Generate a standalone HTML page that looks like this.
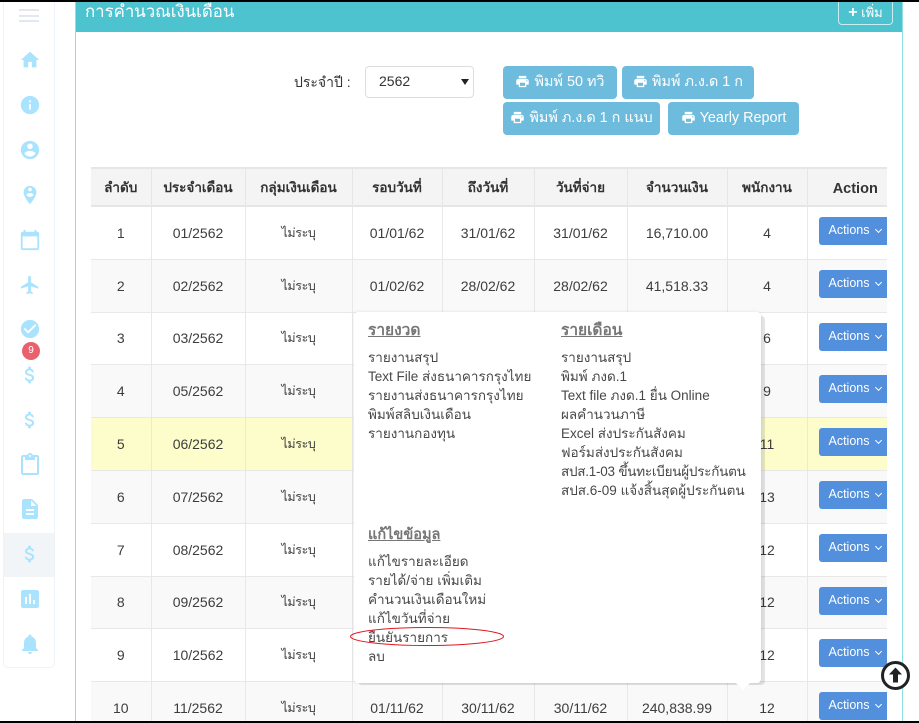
<!DOCTYPE html>
<html lang="th"><head><meta charset="utf-8"><title>การคำนวณเงินเดือน</title>
<style>
*{box-sizing:border-box}
html,body{margin:0;padding:0;width:919px;height:723px;overflow:hidden;background:#fff;font-family:"Liberation Sans","Noto Sans CJK SC",sans-serif;color:#333}
#wrap{position:relative;width:919px;height:723px;overflow:hidden}
.a{position:absolute}
#top{left:0;top:0;width:919px;height:2px;background:#000;z-index:20}
#bot{left:0;top:721px;width:919px;height:2px;background:#000;z-index:20}
#side{left:3px;top:-5px;width:52px;height:673px;border:1px solid #edf3f8;border-radius:5px;background:#fff}
#act{left:4px;top:533px;width:50px;height:44px;background:#f1f5f8}
.burger{left:19px;width:20px;height:2px;background:#e3e7ef}
.ic{fill:#a9e3fe;position:absolute}
#badge{left:22px;top:342px;width:18px;height:18px;border-radius:50%;background:#e9616d;color:#fff;font-size:10px;line-height:18px;text-align:center}
#panel{left:75px;top:0;width:828px;height:723px;border:1px solid #8fdfe2;border-width:0 1px}
#hd{left:76px;top:2px;width:826px;height:30px;background:#4ec3d0}
#title{left:85px;top:0;color:#fff;font-size:16.8px;line-height:23px;white-space:nowrap}
#add{left:838px;top:0;width:55px;height:25px;border:1px solid #c9eef2;border-radius:0 0 4px 4px;color:#fff;font-size:13px;line-height:23px;text-align:center;white-space:nowrap}
#lab{left:294px;top:72px;font-size:14px;line-height:20px;white-space:nowrap}
#sel{left:365px;top:66px;width:109px;height:32px;border:1px solid #ddd;border-radius:4px;font-size:14px;line-height:28px;padding-left:13px;background:#fff}
#sel i{position:absolute;right:4px;top:12px;width:0;height:0;border:4px solid transparent;border-top:6px solid #222;border-bottom:0}
.btn{background:#6dbcde;color:#fff;border-radius:4px;font-size:14.4px;height:33px;line-height:33px;text-align:center;white-space:nowrap}
.btn svg{fill:#fff;vertical-align:-3px;margin-right:4px}
table{position:absolute;left:91px;top:167px;width:796px;border-collapse:collapse;table-layout:fixed;font-size:14px}
th{height:38px;background:#f4f4f4;border:1px solid #e6e6e6;border-width:2px 1px;font-weight:700;font-size:13.5px;color:#333;padding:0;text-align:center;white-space:nowrap}
th.act{font-size:14.5px;padding:3px 0 0 16px}
td{height:53px;border:1px solid #e8e8e8;text-align:center;padding:0;white-space:nowrap;color:#3d3d3d}
tr.s td{height:52px}
td .n{font-size:12.5px;letter-spacing:-.4px}
tr.o td{background:#f9f9f9}
tr.y td{background:#fcfdcb}
th:first-child,td:first-child{border-left:0}
th:last-child,td:last-child{border-right:0}
.ac{display:block;position:relative;top:0;margin-left:11px;width:68px;height:28px;background:#528fdc;color:#fff;border-radius:3px 0 0 3px;font-size:12.5px;line-height:26px;text-align:left;padding-left:10px;margin-top:-3px}
.ac b{display:inline-block;width:5px;height:5px;border:solid #fff;border-width:0 1px 1px 0;transform:rotate(45deg);margin:0 0 2px 3px}
#shade{left:358px;top:316px;width:407px;height:369px;background:rgba(0,0,0,.1);border-radius:4px}
#pop{left:354px;top:312px;width:407px;height:371px;background:#fff;border-radius:4px;box-shadow:0 0 3px rgba(0,0,0,.1)}
.ml{position:absolute;font-size:13.5px;line-height:19px;color:#484848;white-space:nowrap}
.mh{position:absolute;font-size:15.5px;line-height:20px;color:#777;font-weight:700;text-decoration:underline;white-space:nowrap}
</style></head><body>
<div id="wrap">
<div class="a" id="side"></div><div class="a" id="act"></div>
<div class="a burger" style="top:9px"></div><div class="a burger" style="top:15px"></div><div class="a burger" style="top:20px"></div>
<svg class="ic" style="left:19px;top:49px" width="22" height="22" viewBox="0 0 24 24"><path d="M10 20v-6h4v6h5v-8h3L12 3 2 12h3v8z"/></svg>
<svg class="ic" style="left:19px;top:94px" width="22" height="22" viewBox="0 0 24 24"><path d="M12 2C6.48 2 2 6.48 2 12s4.48 10 10 10 10-4.48 10-10S17.52 2 12 2zm1 15h-2v-6h2v6zm0-8h-2V7h2v2z"/></svg>
<svg class="ic" style="left:19px;top:139px" width="22" height="22" viewBox="0 0 24 24"><path d="M12 2C6.48 2 2 6.48 2 12s4.48 10 10 10 10-4.48 10-10S17.52 2 12 2zm0 3c1.66 0 3 1.34 3 3s-1.34 3-3 3-3-1.34-3-3 1.34-3 3-3zm0 14.2c-2.5 0-4.71-1.28-6-3.22.03-1.99 4-3.08 6-3.08 1.99 0 5.97 1.09 6 3.08-1.29 1.94-3.5 3.22-6 3.22z"/></svg>
<svg class="ic" style="left:19px;top:184px" width="22" height="22" viewBox="0 0 24 24"><path d="M12 2C8.14 2 5 5.14 5 9c0 5.25 7 13 7 13s7-7.75 7-13c0-3.86-3.14-7-7-7zm0 2c1.1 0 2 .9 2 2 0 1.11-.9 2-2 2s-2-.89-2-2c0-1.1.9-2 2-2zm0 10c-1.67 0-3.14-.85-4-2.15.02-1.32 2.67-2.05 4-2.05s3.98.73 4 2.05c-.86 1.3-2.33 2.15-4 2.15z"/></svg>
<svg class="ic" style="left:19px;top:229px" width="22" height="22" viewBox="0 0 24 24"><path d="M20 3h-1V1h-2v2H7V1H5v2H4c-1.1 0-2 .9-2 2v16c0 1.1.9 2 2 2h16c1.1 0 2-.9 2-2V5c0-1.1-.9-2-2-2zm0 18H4V8h16v13z"/></svg>
<svg class="ic" style="left:19px;top:274px" width="22" height="22" viewBox="0 0 24 24"><path d="M21 16v-2l-8-5V3.5c0-.83-.67-1.5-1.5-1.5S10 2.67 10 3.5V9l-8 5v2l8-2.5V19l-2 1.5V22l3.5-1 3.5 1v-1.5L13 19v-5.5l8 2.5z"/></svg>
<svg class="ic" style="left:19px;top:318px" width="22" height="22" viewBox="0 0 24 24"><path d="M12 2C6.48 2 2 6.48 2 12s4.48 10 10 10 10-4.48 10-10S17.52 2 12 2zm-2 15l-5-5 1.41-1.41L10 14.17l7.59-7.59L19 8l-9 9z"/></svg>
<div class="a" id="badge">9</div>
<svg class="ic" style="left:19px;top:364px" width="22" height="22" viewBox="0 0 24 24"><path d="M11.8 10.9c-2.27-.59-3-1.2-3-2.15 0-1.09 1.01-1.85 2.7-1.85 1.78 0 2.44.85 2.5 2.1h2.21c-.07-1.72-1.12-3.3-3.21-3.81V3h-3v2.16c-1.94.42-3.5 1.68-3.5 3.61 0 2.31 1.91 3.46 4.7 4.13 2.5.6 3 1.48 3 2.41 0 .69-.49 1.79-2.7 1.79-2.06 0-2.87-.92-2.98-2.1h-2.2c.12 2.19 1.76 3.42 3.68 3.83V21h3v-2.15c1.95-.37 3.5-1.5 3.5-3.55 0-2.84-2.43-3.81-4.7-4.4z"/></svg>
<svg class="ic" style="left:19px;top:409px" width="22" height="22" viewBox="0 0 24 24"><path d="M11.8 10.9c-2.27-.59-3-1.2-3-2.15 0-1.09 1.01-1.85 2.7-1.85 1.78 0 2.44.85 2.5 2.1h2.21c-.07-1.72-1.12-3.3-3.21-3.81V3h-3v2.16c-1.94.42-3.5 1.68-3.5 3.61 0 2.31 1.91 3.46 4.7 4.13 2.5.6 3 1.48 3 2.41 0 .69-.49 1.79-2.7 1.79-2.06 0-2.87-.92-2.98-2.1h-2.2c.12 2.19 1.76 3.42 3.68 3.83V21h3v-2.15c1.95-.37 3.5-1.5 3.5-3.55 0-2.84-2.43-3.81-4.7-4.4z"/></svg>
<svg class="ic" style="left:18px;top:452px" width="24" height="24" viewBox="0 0 24 24"><path d="M19 3h-4.18C14.4 1.84 13.3 1 12 1c-1.3 0-2.4.84-2.82 2H5c-1.1 0-2 .9-2 2v16c0 1.1.9 2 2 2h14c1.1 0 2-.9 2-2V5c0-1.1-.9-2-2-2zm-7 0c.55 0 1 .45 1 1s-.45 1-1 1-1-.45-1-1 .45-1 1-1zm7 18H5V5h2v3h10V5h2v16z"/></svg>
<svg class="ic" style="left:18px;top:497px" width="24" height="24" viewBox="0 0 24 24"><path d="M14 2H6c-1.1 0-1.99.9-1.99 2L4 20c0 1.1.89 2 1.99 2H18c1.1 0 2-.9 2-2V8l-6-6zm2 16H8v-2h8v2zm0-4H8v-2h8v2zm-3-5V3.5L18.5 9H13z"/></svg>
<svg class="ic" style="left:19px;top:543px" width="22" height="22" viewBox="0 0 24 24"><path d="M11.8 10.9c-2.27-.59-3-1.2-3-2.15 0-1.09 1.01-1.85 2.7-1.85 1.78 0 2.44.85 2.5 2.1h2.21c-.07-1.72-1.12-3.3-3.21-3.81V3h-3v2.16c-1.94.42-3.5 1.68-3.5 3.61 0 2.31 1.91 3.46 4.7 4.13 2.5.6 3 1.48 3 2.41 0 .69-.49 1.79-2.7 1.79-2.06 0-2.87-.92-2.98-2.1h-2.2c.12 2.19 1.76 3.42 3.68 3.83V21h3v-2.15c1.95-.37 3.5-1.5 3.5-3.55 0-2.84-2.43-3.81-4.7-4.4z"/></svg>
<svg class="ic" style="left:18px;top:587px" width="24" height="24" viewBox="0 0 24 24"><path d="M19 3H5c-1.1 0-2 .9-2 2v14c0 1.1.9 2 2 2h14c1.1 0 2-.9 2-2V5c0-1.1-.9-2-2-2zM9 17H7v-7h2v7zm4 0h-2V7h2v10zm4 0h-2v-4h2v4z"/></svg>
<svg class="ic" style="left:18px;top:632px" width="24" height="24" viewBox="0 0 24 24"><path d="M12 22c1.1 0 2-.9 2-2h-4c0 1.1.89 2 2 2zm6-6v-5c0-3.07-1.64-5.64-4.5-6.32V4c0-.83-.67-1.5-1.5-1.5s-1.5.67-1.5 1.5v.68C7.63 5.36 6 7.92 6 11v5l-2 2v1h16v-1l-2-2z"/></svg>

<div class="a" id="panel"></div>
<div class="a" id="hd"></div>
<div class="a" id="title">การคำนวณเงินเดือน</div>
<div class="a" id="add"><b style="font-size:16px">+</b> เพิ่ม</div>

<div class="a" id="lab">ประจำปี :</div>
<div class="a" id="sel">2562<i></i></div>
<div class="a btn" style="left:503px;top:66px;width:114px"><svg width="15" height="15" viewBox="0 0 24 24"><path d="M19 8H5c-1.66 0-3 1.34-3 3v6h4v4h12v-4h4v-6c0-1.66-1.34-3-3-3zm-3 11H8v-5h8v5zm3-7c-.55 0-1-.45-1-1s.45-1 1-1 1 .45 1 1-.45 1-1 1zm-1-9H6v4h12V3z"/></svg>พิมพ์ 50 ทวิ</div>
<div class="a btn" style="left:622px;top:66px;width:132px"><svg width="15" height="15" viewBox="0 0 24 24"><path d="M19 8H5c-1.66 0-3 1.34-3 3v6h4v4h12v-4h4v-6c0-1.66-1.34-3-3-3zm-3 11H8v-5h8v5zm3-7c-.55 0-1-.45-1-1s.45-1 1-1 1 .45 1 1-.45 1-1 1zm-1-9H6v4h12V3z"/></svg>พิมพ์ ภ.ง.ด 1 ก</div>
<div class="a btn" style="left:503px;top:102px;width:157px"><svg width="15" height="15" viewBox="0 0 24 24"><path d="M19 8H5c-1.66 0-3 1.34-3 3v6h4v4h12v-4h4v-6c0-1.66-1.34-3-3-3zm-3 11H8v-5h8v5zm3-7c-.55 0-1-.45-1-1s.45-1 1-1 1 .45 1 1-.45 1-1 1zm-1-9H6v4h12V3z"/></svg>พิมพ์ ภ.ง.ด 1 ก แนบ</div>
<div class="a btn" style="left:668px;top:102px;width:131px"><svg width="15" height="15" viewBox="0 0 24 24"><path d="M19 8H5c-1.66 0-3 1.34-3 3v6h4v4h12v-4h4v-6c0-1.66-1.34-3-3-3zm-3 11H8v-5h8v5zm3-7c-.55 0-1-.45-1-1s.45-1 1-1 1 .45 1 1-.45 1-1 1zm-1-9H6v4h12V3z"/></svg>Yearly Report</div>

<table>
<colgroup><col style="width:60px"><col style="width:94px"><col style="width:107px"><col style="width:90px"><col style="width:92px"><col style="width:93px"><col style="width:100px"><col style="width:80px"><col style="width:80px"></colgroup>
<tr><th>ลำดับ</th><th>ประจำเดือน</th><th>กลุ่มเงินเดือน</th><th>รอบวันที่</th><th>ถึงวันที่</th><th>วันที่จ่าย</th><th>จำนวนเงิน</th><th>พนักงาน</th><th class="act">Action</th></tr>
<tr><td>1</td><td>01/2562</td><td><span class="n">ไม่ระบุ</span></td><td>01/01/62</td><td>31/01/62</td><td>31/01/62</td><td>16,710.00</td><td>4</td><td><span class="ac">Actions <b></b></span></td></tr>
<tr class="o"><td>2</td><td>02/2562</td><td><span class="n">ไม่ระบุ</span></td><td>01/02/62</td><td>28/02/62</td><td>28/02/62</td><td>41,518.33</td><td>4</td><td><span class="ac">Actions <b></b></span></td></tr>
<tr class="s"><td>3</td><td>03/2562</td><td><span class="n">ไม่ระบุ</span></td><td></td><td></td><td></td><td></td><td>6</td><td><span class="ac">Actions <b></b></span></td></tr>
<tr class="o"><td>4</td><td>05/2562</td><td><span class="n">ไม่ระบุ</span></td><td></td><td></td><td></td><td></td><td>9</td><td><span class="ac">Actions <b></b></span></td></tr>
<tr class="y"><td>5</td><td>06/2562</td><td><span class="n">ไม่ระบุ</span></td><td></td><td></td><td></td><td></td><td>11</td><td><span class="ac">Actions <b></b></span></td></tr>
<tr class="o"><td>6</td><td>07/2562</td><td><span class="n">ไม่ระบุ</span></td><td></td><td></td><td></td><td></td><td>13</td><td><span class="ac">Actions <b></b></span></td></tr>
<tr><td>7</td><td>08/2562</td><td><span class="n">ไม่ระบุ</span></td><td></td><td></td><td></td><td></td><td>12</td><td><span class="ac">Actions <b></b></span></td></tr>
<tr class="o s"><td>8</td><td>09/2562</td><td><span class="n">ไม่ระบุ</span></td><td></td><td></td><td></td><td></td><td>12</td><td><span class="ac">Actions <b></b></span></td></tr>
<tr><td>9</td><td>10/2562</td><td><span class="n">ไม่ระบุ</span></td><td></td><td></td><td></td><td></td><td>12</td><td><span class="ac">Actions <b></b></span></td></tr>
<tr class="o"><td>10</td><td>11/2562</td><td><span class="n">ไม่ระบุ</span></td><td>01/11/62</td><td>30/11/62</td><td>30/11/62</td><td>240,838.99</td><td>12</td><td><span class="ac">Actions <b></b></span></td></tr>
</table>

<div class="a" id="shade"></div>
<div class="a" id="pop"></div>
<div class="a" style="left:738px;top:678px;width:10px;height:10px;background:#fff;transform:rotate(45deg)"></div>
<div class="mh" style="left:368px;top:321px">รายงวด</div>
<div class="ml" style="left:368px;top:348px">รายงานสรุป</div>
<div class="ml" style="left:368px;top:367px">Text File ส่งธนาคารกรุงไทย</div>
<div class="ml" style="left:368px;top:386px">รายงานส่งธนาคารกรุงไทย</div>
<div class="ml" style="left:368px;top:405px">พิมพ์สลิบเงินเดือน</div>
<div class="ml" style="left:368px;top:424px">รายงานกองทุน</div>
<div class="mh" style="left:561px;top:321px">รายเดือน</div>
<div class="ml" style="left:561px;top:348px">รายงานสรุป</div>
<div class="ml" style="left:561px;top:367px">พิมพ์ ภงด.1</div>
<div class="ml" style="left:561px;top:386px">Text file ภงด.1 ยื่น Online</div>
<div class="ml" style="left:561px;top:405px">ผลคำนวนภาษี</div>
<div class="ml" style="left:561px;top:424px">Excel ส่งประกันสังคม</div>
<div class="ml" style="left:561px;top:443px">ฟอร์มส่งประกันสังคม</div>
<div class="ml" style="left:561px;top:462px;letter-spacing:-.25px">สปส.1-03 ขึ้นทะเบียนผู้ประกันตน</div>
<div class="ml" style="left:561px;top:481px">สปส.6-09 แจ้งสิ้นสุดผู้ประกันตน</div>
<div class="mh" style="left:368px;top:525px;font-size:14.5px">แก้ไขข้อมูล</div>
<div class="ml" style="left:368px;top:552px">แก้ไขรายละเอียด</div>
<div class="ml" style="left:368px;top:571px">รายได้/จ่าย เพิ่มเติม</div>
<div class="ml" style="left:368px;top:590px">คำนวนเงินเดือนใหม่</div>
<div class="ml" style="left:368px;top:609px">แก้ไขวันที่จ่าย</div>
<div class="ml" style="left:368px;top:628px">ยืนยันรายการ</div>
<div class="ml" style="left:368px;top:647px">ลบ</div>
<svg class="a" style="left:345px;top:622px;z-index:5" width="165" height="30"><ellipse cx="82" cy="14.5" rx="76.5" ry="9" fill="none" stroke="#e0161e" stroke-width="1"/></svg>
<svg class="a" style="left:880px;top:660px;z-index:6" width="31" height="31" viewBox="0 0 31 31"><circle cx="15.5" cy="15.5" r="13" fill="#fff" stroke="#222" stroke-width="3"/><path d="M15.5 7.5l6.5 7h-4v8h-5v-8h-4z" fill="#222"/></svg>
<div class="a" id="top"></div><div class="a" id="bot"></div>
</div>
</body></html>
